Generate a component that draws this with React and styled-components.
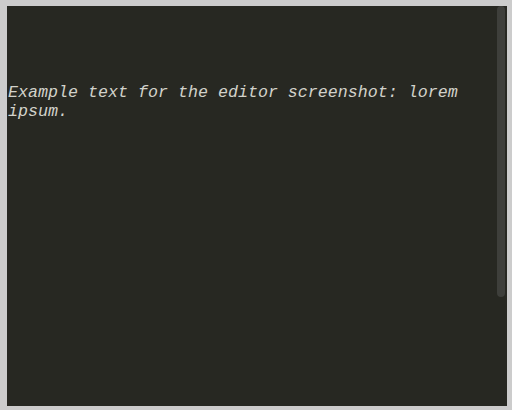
import React from "react";
import styled, { createGlobalStyle } from "styled-components";

const Global = createGlobalStyle`
  html, body { margin: 0; padding: 0; background: #cccccc; }
  #root { width: 512px; height: 410px; }
`;

const Frame = styled.div`
  width: 512px;
  height: 410px;
  box-sizing: border-box;
  padding: 6px 5px 4px 7px;
  background: #cccccc;
`;

const Editor = styled.div`
  width: 500px;
  height: 400px;
  background: #272822;
  display: flex;
`;

const Content = styled.div`
  flex: 1;
  min-width: 0;
  padding: 77px 0 0 1px;
  font-family: "Liberation Mono", "Courier New", monospace;
  font-style: italic;
  font-size: 16.67px;
  line-height: 19px;
  color: #d2d2ca;
  white-space: pre-wrap;
`;

const Track = styled.div`
  width: 10px;
  display: flex;
  flex-direction: column;
`;

const Thumb = styled.div`
  width: 8px;
  height: ${(p) => p.$h}px;
  background: #3e3f3b;
  border-radius: 4px;
`;

export default function App() {
  return (
    <>
      <Global />
      <Frame>
        <Editor>
          <Content>Example text for the editor screenshot: lorem ipsum.</Content>
          <Track>
            <Thumb $h={291} />
          </Track>
        </Editor>
      </Frame>
    </>
  );
}
